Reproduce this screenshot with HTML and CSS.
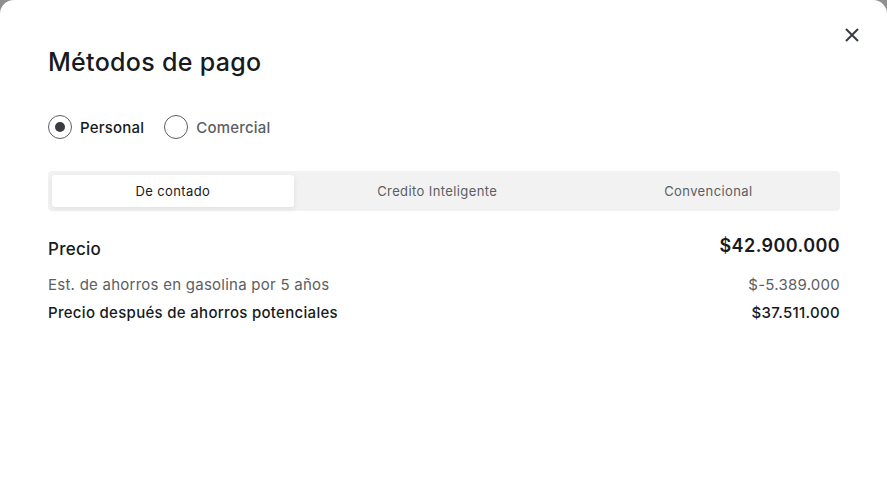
FILE: index.html
```html
<!DOCTYPE html>
<html lang="es">
<head>
<meta charset="utf-8">
<link rel="stylesheet" href="styles.css">
</head>
<body>
<div class="modal">
  <button class="close" aria-label="Cerrar">
    <svg width="16" height="16" viewBox="0 0 16 16"><path d="M2 2L14 14M14 2L2 14" stroke="#393c41" stroke-width="2" fill="none"/></svg>
  </button>
  <h1 class="title">Métodos de pago</h1>
  <div class="radios">
    <label class="radio active"><span class="dot"></span>Personal</label>
    <label class="radio"><span class="dot"></span>Comercial</label>
  </div>
  <div class="tabs">
    <div class="tab active">De contado</div>
    <div class="tab">Credito Inteligente</div>
    <div class="tab">Convencional</div>
  </div>
  <div class="row price">
    <span>Precio</span>
    <span class="amount">$42.900.000</span>
  </div>
  <div class="row muted">
    <span>Est. de ahorros en gasolina por 5 años</span>
    <span>$-5.389.000</span>
  </div>
  <div class="row strong">
    <span>Precio después de ahorros potenciales</span>
    <span>$37.511.000</span>
  </div>
</div>
</body>
</html>
```

FILE: styles.css
```css
* { box-sizing: border-box; }
html, body { margin: 0; height: 100%; overflow: hidden; }
body {
  background: #8f8f8f;
  font-family: "Inter", "Liberation Sans", sans-serif;
  color: #171a20;
}
.modal {
  position: relative;
  background: #fff;
  height: 504px;
  border-radius: 14px 14px 0 0;
  padding: 45px 47px 0 48px;
}
.close {
  position: absolute;
  top: 27px;
  right: 27px;
  border: 0;
  background: none;
  padding: 0;
  width: 16px;
  height: 16px;
  display: flex;
}
.title {
  margin: 0;
  font-size: 25px;
  font-weight: 500;
  line-height: 34px;
  letter-spacing: 0.3px;
}
.radios {
  display: flex;
  gap: 20px;
  margin-top: 36px;
}
.radio {
  display: flex;
  align-items: center;
  gap: 8px;
  font-size: 15px;
  font-weight: 500;
  color: #5c5e62;
  letter-spacing: 0.2px;
}
.radio.active { color: #171a20; }
.dot {
  width: 24px;
  height: 24px;
  border: 1px solid #5c5e62;
  border-radius: 50%;
  display: flex;
  align-items: center;
  justify-content: center;
}
.radio.active .dot::after {
  content: "";
  width: 10px;
  height: 10px;
  border-radius: 50%;
  background: #393c41;
}
.tabs {
  display: flex;
  margin-top: 32px;
  background: #f2f2f2;
  border-radius: 4px;
  padding: 4px;
  height: 40px;
}
.tab {
  flex: 1 1 auto;
  display: flex;
  align-items: center;
  justify-content: center;
  font-size: 13px;
  color: #5c5e62;
  letter-spacing: 0.4px;
}
.tab.active {
  background: #fff;
  color: #171a20;
  border-radius: 3px;
  box-shadow: 0 2px 6px rgba(0,0,0,0.08);
}
.row {
  display: flex;
  justify-content: space-between;
  align-items: baseline;
  font-size: 15px;
  line-height: 28px;
  letter-spacing: 0.25px;
}
.price {
  margin-top: 23px;
  font-size: 17px;
  font-weight: 500;
  align-items: flex-start;
  line-height: 30px;
  margin-bottom: 7px;
}
.price .amount { font-size: 18px; font-weight: 600; line-height: 24px; letter-spacing: 0.4px; }
.muted { color: #5c5e62; }
.strong { font-weight: 500; letter-spacing: 0.3px; }
```
